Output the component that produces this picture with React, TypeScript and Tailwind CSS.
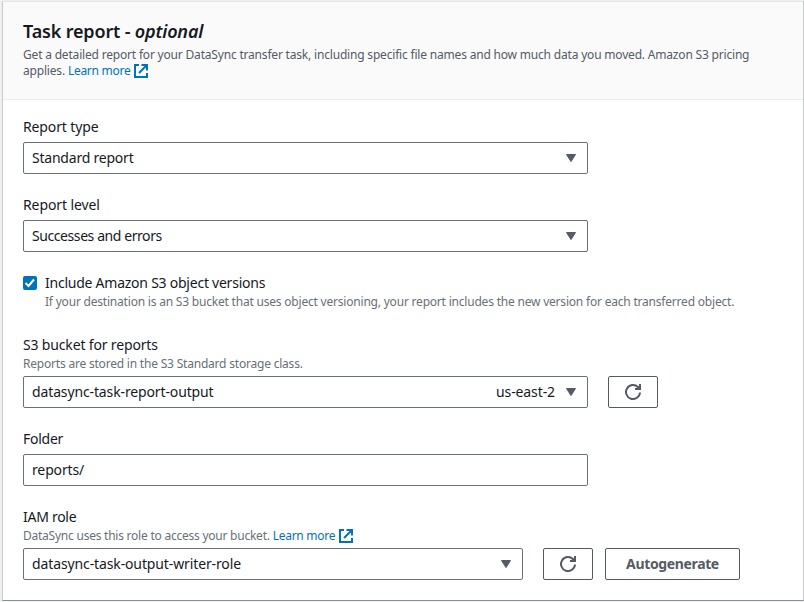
import type { ReactNode } from "react";

function Caret() {
  return (
    <svg width="10" height="8" viewBox="0 0 10 8" className="shrink-0">
      <path d="M0.5 0.5h9L5 7.6z" fill="#545b64" stroke="#545b64" strokeLinejoin="round" />
    </svg>
  );
}

function ExternalIcon() {
  return (
    <svg width="14" height="14" viewBox="0 0 14 14" fill="none" stroke="#0073bb" strokeWidth="2" className="shrink-0">
      <path d="M5 1H1v12h12V9" />
      <path d="M7.5 1H13v5.5M13 1L5 9" />
    </svg>
  );
}

function RefreshButton() {
  return (
    <button className="flex h-8 w-[50px] shrink-0 items-center justify-center rounded-[2px] border border-[#545b64] bg-white" aria-label="Refresh">
      <svg width="16" height="16" viewBox="0 0 16 16" fill="none" stroke="#545b64" strokeWidth="2">
        <path d="M15 8.5A7 7 0 1 1 12.9 3L14.5 4.7" />
        <path d="M10 5h5V0" />
        <path d="M11.5 4.5h3v-3z" fill="#545b64" stroke="none" />
      </svg>
    </button>
  );
}

function Label({ children, className = "" }: { children: ReactNode; className?: string }) {
  return <div className={`h-[22px] whitespace-nowrap text-sm leading-[22px] ${className}`}>{children}</div>;
}

function Hint({ children, className = "" }: { children: ReactNode; className?: string }) {
  return (
    <div className={`flex h-4 items-center text-xs leading-4 tracking-[-0.203px] whitespace-nowrap text-[#687078] ${className}`}>{children}</div>
  );
}

function LearnMore() {
  return (
    <a className="ml-[3px] flex items-center gap-1 text-[#0073bb]">
      <span className="tracking-[-0.28px]">Learn more</span>
      <ExternalIcon />
    </a>
  );
}

function Select({ value, extra, width = "w-[565px]", tracking = "" }: { value: string; extra?: string; width?: string; tracking?: string }) {
  return (
    <div className={`flex h-8 items-center rounded-[2px] border border-[#687078] bg-white pr-[11px] pl-2 text-sm ${width}`}>
      <span className={`flex-1 whitespace-nowrap ${tracking}`}>{value}</span>
      {extra && <span className="mr-[11px] tracking-[-0.1px] whitespace-nowrap">{extra}</span>}
      <Caret />
    </div>
  );
}

export default function App() {
  return (
    <div className="h-[602px] w-[804px] bg-[#eff1f1] pt-px pl-[2px] font-['Noto_Sans',sans-serif] text-[#16191f]">
      <section className="h-[600px] w-[802px] border border-t-[#e3e6e6] border-r-[#c6cbcb] border-b-[#879596] border-l-[#c6cccd] bg-white">
        <header className="h-[98px] border-b border-[#eaeded] bg-[#fafafa] pt-[18px] pl-5">
          <h2 className="h-[27px] text-lg leading-[22px] font-semibold tracking-[-0.16px]">
            Task report - <i>optional</i>
          </h2>
          <p className="text-xs leading-4 tracking-[-0.188px] whitespace-nowrap text-[#545b64]">
            <span className="block">Get a detailed report for your DataSync transfer task, including specific file names and how much data you moved. Amazon S3 pricing</span>
            <span className="flex items-center">
              <span>applies.</span>
              <LearnMore />
            </span>
          </p>
        </header>
        <div className="flex flex-col gap-5 pt-4 pl-5">
          <div>
            <Label className="mb-1 tracking-[-0.13px]">Report type</Label>
            <Select value="Standard report" tracking="tracking-[-0.22px]" />
          </div>
          <div>
            <Label className="mb-1 tracking-[-0.1px]">Report level</Label>
            <Select value="Successes and errors" tracking="tracking-[-0.42px]" />
          </div>
          <div className="mb-1 flex gap-2">
            <span className="mt-1 flex h-[14px] w-[14px] items-center justify-center rounded-[2px] bg-[#0073bb]">
              <svg width="14" height="14" viewBox="0 0 14 14" fill="none" stroke="#fff" strokeWidth="2">
                <path d="M2.5 7l3 3L11 3.5" />
              </svg>
            </span>
            <div>
              <Label className="tracking-[-0.24px]">Include Amazon S3 object versions</Label>
              <Hint>If your destination is an S3 bucket that uses object versioning, your report includes the new version for each transferred object.</Hint>
            </div>
          </div>
          <div>
            <Label className="tracking-[-0.16px]">S3 bucket for reports</Label>
            <Hint className="mb-1">Reports are stored in the S3 Standard storage class.</Hint>
            <div className="flex gap-5">
              <Select value="datasync-task-report-output" extra="us-east-2" tracking="tracking-[-0.13px]" />
              <RefreshButton />
            </div>
          </div>
          <div>
            <Label className="mb-1 tracking-[-0.25px]">Folder</Label>
            <div className="flex h-8 w-[565px] items-center rounded-[2px] border border-[#687078] pl-2 text-sm tracking-[-0.13px]">reports/</div>
          </div>
          <div>
            <Label className="tracking-[-0.28px]">IAM role</Label>
            <Hint className="mb-1">
              <span className="tracking-[-0.235px]">DataSync uses this role to access your bucket.</span>
              <LearnMore />
            </Hint>
            <div className="flex">
              <Select value="datasync-task-output-writer-role" width="w-[500px]" tracking="tracking-[-0.12px]" />
              <div className="ml-5 flex gap-3">
                <RefreshButton />
                <button className="h-8 w-[135px] rounded-[2px] border border-[#545b64] text-sm font-bold tracking-[-0.36px] text-[#545b64]">
                  Autogenerate
                </button>
              </div>
            </div>
          </div>
        </div>
      </section>
    </div>
  );
}
